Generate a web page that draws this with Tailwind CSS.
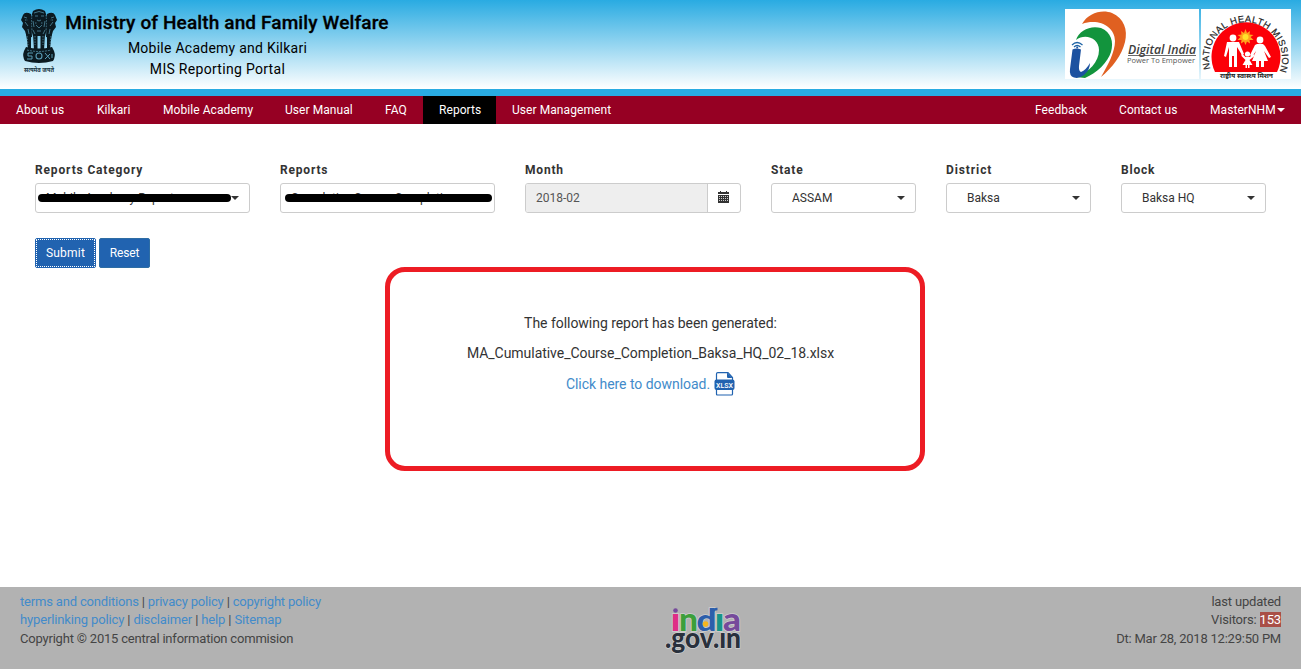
<!DOCTYPE html>
<html lang="en">
<head>
<meta charset="utf-8">
<title>MIS Reporting Portal</title>
<script src="https://cdn.jsdelivr.net/npm/@tailwindcss/browser@4"></script>
</head>
<body class="w-[1301px] h-[669px] overflow-hidden flex flex-col bg-white font-['Roboto',sans-serif] text-[#333]">
<header class="h-24 shrink-0 flex justify-between bg-linear-to-b/srgb from-[#29abe2] to-white to-[89px] border-b-[7px] border-[#29abe2]">
  <div class="flex">
    <svg class="ml-5 mt-2 w-[38px] h-[66px]" viewBox="0 0 38 66">
      <g fill="#0b1a21">
        <path d="M13 3q6-4 12 0l2 6 1 9-3 10H13L10 18l1-9z"/>
        <path d="M11 6Q5 3 3 7L1 12l2 3-1 4 3 4 2 7 5-1zM27 6q6-3 8 1l2 5-2 3 1 4-3 4-2 7-5-1z"/>
        <path d="M6 24h5v17H8zM13 26h4.500v16H14zM20.500 26H25l-1 16h-3.500zM27 24h5l-2 17h-3z"/>
        <path d="M6 39q13 3 26 0l2 4q2 5-1 10-14 4-28 0-3-5-1-10z"/>
      </g>
      <g fill="none" stroke="#5a9cb5" stroke-width=".7">
        <path d="M14 5q5-3 10 0M15 8h3M21 8h3M17 12q2 2 4 0M13 13l1 6M25 13l-1 6M16 17l3 3 3-3M13 22l2 4M25 22l-2 4M4 9l3 1M34 9l-3 1M5 14l3 4M33 14l-3 4M17 23h4M8 21l1 5M30 21l-1 5"/>
        <path d="M12 7q-1 7 0 15M26 7q1 7 0 15M5 12h3M33 12h-3M15 15h2M21 15h2M7 28l1 9M31 28l-1 9M15 28v9M23 28v9" stroke-dasharray="1.500 1.200"/>
        <path d="M7 42q12 3 24 0" stroke-dasharray="2 1"/>
        <path d="M13 45H8v3h4v3H7M25 45l5 6M25 51l5-5M32 46v4" stroke-width="1"/>
        <circle cx="19" cy="48" r="3" stroke-width="1.100"/>
      </g>
      <text x="4" y="64" textLength="30" lengthAdjust="spacingAndGlyphs" font-size="6.5" font-weight="700" font-family="Noto Sans, sans-serif" fill="#16333f">सत्यमेव जयते</text>
    </svg>
    <div class="ml-[7px] pt-[10px] flex flex-col items-center text-black w-[324px]">
      <div class="text-[19px] leading-[26px] font-medium whitespace-nowrap tracking-[.13px] [-webkit-text-stroke:.3px_black]">Ministry of Health and Family Welfare</div>
      <div class="mt-[2px] pr-[19px] text-[14px] leading-[21px] whitespace-nowrap tracking-[.25px]">Mobile Academy and Kilkari</div>
      <div class="pr-[19px] text-[14px] leading-[20px] whitespace-nowrap tracking-[.3px]">MIS Reporting Portal</div>
    </div>
  </div>
  <div class="flex gap-[2px] mr-[10px] mt-[9px]">
    <svg class="w-[134px] h-[70px] bg-white" viewBox="0 0 134 70">
      <path d="M17 15C23 4 37 0 47 4c12 5 16 17 13 29C57 46 47 59 36 68 43 56 50 43 50 32 50 17 33 9 17 15z" fill="#e06021"/>
      <path d="M11 31C14 21 26 16 36 19c10 4 13 14 10 24C43 53 32 64 20 69l-9-1C24 63 34 53 34 41 34 29 20 24 11 31z" fill="#12943d"/>
      <path d="M7.500 40.500q4-2 8.500 0L14 57q-.5 5 2 6 5-2 9-9 0 7-6 12-5 4-10 2.500Q4 67 5 60z" fill="#1c52a0"/>
      <path d="M7 36q5-5 10.500 0M9 38q3-3 6.500 0" fill="none" stroke="#1c62a5" stroke-width="1.200"/>
      <circle cx="12.200" cy="38.500" r="1" fill="#1c52a0"/>
      <text x="63" y="45" textLength="68" lengthAdjust="spacingAndGlyphs" font-size="13" font-weight="600" font-style="italic" font-family="Open Sans, sans-serif" fill="#3d3d3d">Digital India</text>
      <path d="M63 46.500H131" stroke="#444" stroke-width=".8"/>
      <text x="62" y="54" textLength="68" lengthAdjust="spacingAndGlyphs" font-size="7.500" font-family="Open Sans, sans-serif" fill="#555">Power To Empower</text>
    </svg>
    <svg class="w-[90px] h-[70px] bg-white" viewBox="0 0 90 70">
      <defs><path id="ring" d="M9.500 60A36.500 36.500 0 1 1 79.500 60"/></defs>
      <path d="M14 63A34.500 34.500 0 1 1 76 63z" fill="#fb0008"/>
      <text font-size="9.300" font-family="Liberation Sans, sans-serif" fill="#222" stroke="#222" stroke-width=".2"><textPath href="#ring" textLength="138">NATIONAL HEALTH MISSION</textPath></text>
      <path d="M44.500 20l1.500 4 3-2-.5 3.500 4 .5-3 2 3 3-4 0 .5 3.500-3-2-1.500 3.500-1.500-3.500-3 2 .5-3.500-4 0 3-3-3-2 4-.5-.5-3.500 3 2z" fill="#ffa51d"/>
      <circle cx="44.500" cy="28" r="3" fill="#ffe32b"/>
      <g fill="#fff">
        <circle cx="32" cy="29" r="3.400"/><circle cx="59" cy="31" r="3.400"/><circle cx="46.500" cy="45" r="2.600"/>
        <path d="M26 33h12l5 12-2 1-5-8v20h-3V47h-2v11h-3V38l-3 10-2-1z"/>
        <path d="M56 35h6l2 2 6 11-2 1-5-7 4 10h-4v6h-3v-6h-2v6h-3v-6h-4l4-10-4 6-2-2 5-10z"/>
        <path d="M44.500 48h4l5-3v2l-5 4 3 5h-3v3h-1.500v-3h-1v3h-1.500v-3h-3l3-5-4-4v-3z"/>
      </g>
      <text x="19" y="68.500" textLength="53" lengthAdjust="spacingAndGlyphs" font-size="6.500" font-weight="700" font-family="Noto Sans, sans-serif" fill="#222">राष्ट्रीय स्वास्थ्य मिशन</text>
    </svg>
  </div>
</header>
<nav class="h-7 shrink-0 flex bg-[#960023] text-white text-[12px] leading-[28px] tracking-[.07px] whitespace-nowrap">
  <a class="w-[81px] pl-4">About us</a>
  <a class="w-[66px] pl-4">Kilkari</a>
  <a class="w-[122px] pl-4">Mobile Academy</a>
  <a class="w-[100px] pl-4">User Manual</a>
  <a class="w-[54px] pl-4">FAQ</a>
  <a class="w-[73px] pl-4 bg-black">Reports</a>
  <a class="pl-4">User Management</a>
  <a class="ml-auto w-[84px] pl-4">Feedback</a>
  <a class="w-[91px] pl-4">Contact us</a>
  <a class="w-[107px] pl-4 flex items-center gap-px">MasterNHM<span class="border-x-4 border-x-transparent border-t-4 border-t-white"></span></a>
</nav>
<main class="flex-1">
  <section class="flex pt-9 pl-[35px] text-[12px]">
    <div class="w-[245px]">
      <div class="h-[23px] leading-[20px] font-bold tracking-[.85px]">Reports Category</div>
      <div class="relative w-[215px] h-[30px] border border-[#ccc] rounded-[3px] flex items-center justify-between pl-[10px] pr-[10px]">
        <span>Mobile Academy Reports</span>
        <span class="border-x-4 border-x-transparent border-t-4 border-t-[#333]"></span>
        <span class="absolute left-[2px] top-[10px] w-[193px] h-2 rounded-full bg-black"></span>
      </div>
    </div>
    <div class="w-[245px]">
      <div class="h-[23px] leading-[20px] font-bold tracking-[.8px]">Reports</div>
      <div class="relative w-[215px] h-[30px] border border-[#ccc] rounded-[3px] flex items-center pl-[10px]">
        <span>Cumulative Course Completion</span>
        <span class="absolute left-[4px] top-[10px] w-[207px] h-2 rounded-full bg-black"></span>
      </div>
    </div>
    <div class="w-[246px]">
      <div class="h-[23px] leading-[20px] font-bold tracking-[.8px]">Month</div>
      <div class="w-[216px] h-[30px] border border-[#ccc] rounded-[3px] flex overflow-hidden">
        <span class="w-[182px] bg-[#eee] border-r border-[#ccc] pl-[10px] leading-[28px] text-[#555]">2018-02</span>
        <span class="flex-1 flex items-center justify-center pb-[2px] pr-px">
          <svg class="w-[11px] h-3" viewBox="0 0 11 12" shape-rendering="crispEdges"><path d="M0 1h2V0h1v1h5V0h1v1h2v2H0zM0 4h11v8H0z" fill="#333"/><path d="M1 5.500h9M1 7.500h9M1 9.500h9" stroke="#ccc" stroke-width="1" stroke-dasharray="1 1"/></svg>
        </span>
      </div>
    </div>
    <div class="w-[175px]">
      <div class="h-[23px] leading-[20px] font-bold tracking-[.8px]">State</div>
      <div class="w-[145px] h-[30px] border border-[#ccc] rounded-[3px] flex items-center justify-between pl-5 pr-[10px]">ASSAM<span class="border-x-4 border-x-transparent border-t-4 border-t-[#333]"></span></div>
    </div>
    <div class="w-[175px]">
      <div class="h-[23px] leading-[20px] font-bold tracking-[.9px]">District</div>
      <div class="w-[145px] h-[30px] border border-[#ccc] rounded-[3px] flex items-center justify-between pl-5 pr-[10px]">Baksa<span class="border-x-4 border-x-transparent border-t-4 border-t-[#333]"></span></div>
    </div>
    <div>
      <div class="h-[23px] leading-[20px] font-bold tracking-[.8px]">Block</div>
      <div class="w-[145px] h-[30px] border border-[#ccc] rounded-[3px] flex items-center justify-between pl-5 pr-[10px]">Baksa HQ<span class="border-x-4 border-x-transparent border-t-4 border-t-[#333]"></span></div>
    </div>
  </section>
  <div class="flex gap-[3px] mt-[25px] ml-[35px] text-[12px] text-white">
    <button class="w-[61px] h-[30px] rounded-[2px] bg-[#2163b0] border border-[#2163b0] outline-1 outline-dotted outline-white -outline-offset-2 tracking-[.2px]">Submit</button>
    <button class="w-[51px] h-[30px] rounded-[2px] bg-[#2163b0] border border-[#2e6da4] tracking-[-.1px]">Reset</button>
  </div>
  <section class="-mt-px ml-[385px] w-[540px] h-[204px] border-[5px] border-[#ed1c24] rounded-[20px] flex flex-col items-center pt-[41px] pr-[9px] text-[14px] leading-5 whitespace-nowrap tracking-[-.04px]">
    <p>The following report has been generated:</p>
    <p class="mt-[10px]">MA_Cumulative_Course_Completion_Baksa_HQ_02_18.xlsx</p>
    <a class="mt-[9px] flex items-center gap-1 text-[#428bca]">Click here to download.
      <svg class="w-[21px] h-6" viewBox="0 0 21 24"><path d="M2.500 9V2Q2.500.7 3.800.7H14L18.500 5.500V22q0 1-1 1H3.500q-1 0-1-1z" fill="#fff" stroke="#2163b0" stroke-width="1.200"/><path d="M13 .5l5.500 5.500H14q-1 0-1-1z" fill="#2163b0"/><rect x=".5" y="7.500" width="20" height="10.500" rx="2" fill="#2163b0"/><text x="2" y="15.500" textLength="17" lengthAdjust="spacing" font-size="7" font-weight="500" font-family="Roboto, sans-serif" fill="#fff">XLSX</text></svg>
    </a>
  </section>
</main>
<footer class="h-[82px] shrink-0 bg-[#b2b2b2] px-5 pt-[6px] flex text-[13px] leading-[18px] tracking-[-.18px] text-[#444] whitespace-nowrap">
  <div class="w-[645px]">
    <div><a class="text-[#428bca]">terms and conditions</a> | <a class="text-[#428bca]">privacy policy</a> | <a class="text-[#428bca]">copyright policy</a></div>
    <div class="tracking-[-.14px]"><a class="text-[#428bca]">hyperlinking policy</a> | <a class="text-[#428bca]">disclaimer</a> | <a class="text-[#428bca]">help</a> | <a class="text-[#428bca]">Sitemap</a></div>
    <div class="mt-px tracking-[-.2px]">Copyright © 2015 central information commision</div>
  </div>
  <svg class="w-[80px] h-[56px] mt-[10px] shrink-0 overflow-visible" viewBox="0 0 80 56" font-family="Lato, sans-serif" font-weight="900" letter-spacing="0">
    <g stroke="#cfcfcf" stroke-width="1.500" paint-order="stroke">
      <text x="5.500" y="28" font-size="32" fill="#df2e86" textLength="10" lengthAdjust="spacingAndGlyphs">ı</text>
      <text x="14" y="28" font-size="32" fill="#3c9f3b" textLength="19" lengthAdjust="spacingAndGlyphs">n</text>
      <text x="31.500" y="28" font-size="30" fill="#2c5eab" textLength="20" lengthAdjust="spacingAndGlyphs">d</text>
      <text x="49.500" y="28" font-size="32" fill="#179587" textLength="10" lengthAdjust="spacingAndGlyphs">ı</text>
      <text x="58" y="28" font-size="32" fill="#764a9b" textLength="18" lengthAdjust="spacingAndGlyphs">a</text>
      <text x="0" y="44.500" font-size="29" fill="#29303c" textLength="76" lengthAdjust="spacingAndGlyphs">.gov.ın</text>
    </g>
    <circle cx="10.500" cy="7.500" r="2.300" fill="#764a9b"/><circle cx="40.500" cy="21" r="2.800" fill="#f5b51e"/>
    <path d="M47.500 9q1-3 5-3" fill="none" stroke="#2c5eab" stroke-width="2.500"/>
  </svg>
  <div class="ml-auto text-right">
    <div>last updated</div>
    <div>Visitors: <span class="bg-[#a94f47] text-white">153</span></div>
    <div class="mt-px tracking-[-.22px]">Dt: Mar 28, 2018 12:29:50 PM</div>
  </div>
</footer>
</body>
</html>
